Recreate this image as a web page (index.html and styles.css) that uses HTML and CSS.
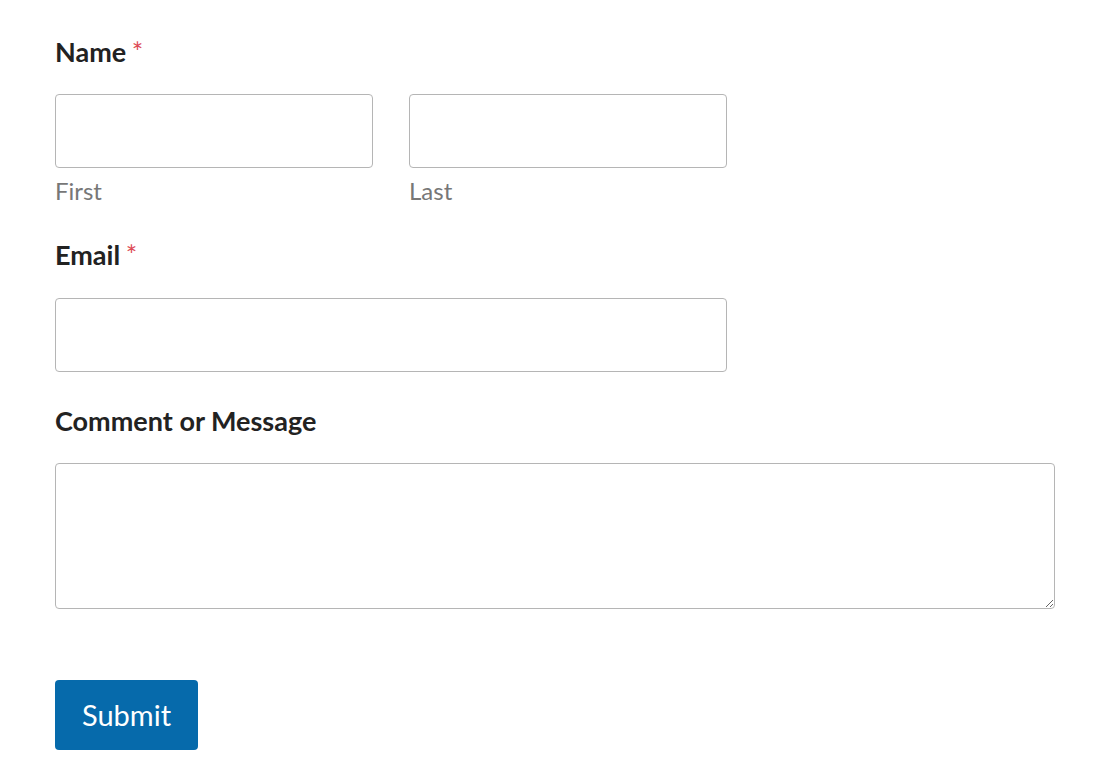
FILE: index.html
```html
<!DOCTYPE html>
<html lang="en">
<head>
  <meta charset="UTF-8" />
  <meta name="viewport" content="width=device-width, initial-scale=1.0" />
  <title>Contact Form</title>
  <link rel="stylesheet" href="styles.css">
</head>
<body>
  <form class="form" onsubmit="return false;">
    <div class="field">
      <label class="label">Name <span class="required">*</span></label>
      <div class="row">
        <div class="col">
          <input class="input" type="text" name="first">
          <div class="sublabel">First</div>
        </div>
        <div class="col">
          <input class="input" type="text" name="last">
          <div class="sublabel">Last</div>
        </div>
      </div>
    </div>

    <div class="field">
      <label class="label">Email <span class="required">*</span></label>
      <input class="input input-medium" type="email" name="email">
    </div>

    <div class="field">
      <label class="label">Comment or Message</label>
      <textarea class="input textarea" name="message"></textarea>
    </div>

    <button class="submit" type="submit">Submit</button>
  </form>
</body>
</html>
```

FILE: styles.css
```css
body {
  margin: 0;
  background-color: #fff;
  font-family: Lato, "Liberation Sans", sans-serif;
  color: #222;
}
.form {
  width: 1000px;
  padding: 36px 55px 0;
}
.field {
  margin-bottom: 33px;
}
.label {
  display: block;
  font-size: 27px;
  line-height: 1.2;
  font-weight: bold;
  color: #222;
  margin-bottom: 26px;
}
.required {
  color: #dd4b56;
  font-weight: normal;
  font-size: 27px;
  margin-left: -1px;
}
.row {
  display: flex;
  gap: 36px;
}
.col {
  width: 318px;
}
.input {
  box-sizing: border-box;
  display: block;
  width: 100%;
  height: 74px;
  margin: 0;
  border: 1px solid #b5b5b5;
  border-radius: 4px;
  background: #fff;
  font-family: inherit;
  font-size: 20px;
}
.input-medium {
  width: 672px;
}
.textarea {
  height: 146px;
  margin-top: 1px;
  resize: vertical;
}
.sublabel {
  margin-top: 9px;
  font-size: 24px;
  line-height: 1.2;
  color: #777;
}
.submit {
  display: block;
  margin-top: 71px;
  width: 143px;
  height: 70px;
  border: none;
  border-radius: 4px;
  background-color: #066aab;
  color: #fff;
  font-family: inherit;
  font-size: 29px;
  cursor: pointer;
}
```
